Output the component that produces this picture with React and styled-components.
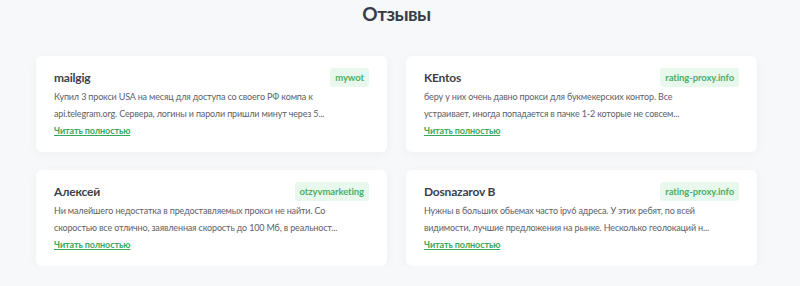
import React from "react"
import styled, { createGlobalStyle } from "styled-components"

const Global = createGlobalStyle`
    body {
        margin: 0;
        background: #f7f8f9;
        font-family: Lato, "Noto Sans", sans-serif;
    }
`

const Section = styled.section`
    width: 721px;
    margin-left: 36px;
    padding-top: 1px;
`

const Title = styled.h2`
    margin: 0 0 30px;
    text-align: center;
    font-size: 19px;
    font-weight: 700;
    letter-spacing: -0.5px;
    line-height: 25px;
    color: #383d49;
`

const Grid = styled.div`
    display: grid;
    grid-template-columns: 351px 351px;
    column-gap: 19px;
    row-gap: 18px;
`

const Card = styled.article`
    background: #fff;
    border-radius: 6px;
    box-shadow: 0 2px 12px rgba(20, 30, 50, 0.04);
    padding: 11px 18px 15px;
    height: 96px;
    box-sizing: border-box;
`

const Head = styled.div`
    display: flex;
    align-items: center;
    justify-content: space-between;
    height: 20px;
`

const Name = styled.h3`
    margin: 0;
    font-size: 12px;
    font-weight: 700;
    letter-spacing: -0.2px;
    color: #3b3f4a;
`

const Badge = styled.span`
    background: #e9f8ed;
    color: #4cae6a;
    font-size: 9.5px;
    font-weight: 700;
    letter-spacing: -0.1px;
    padding: 0 5px;
    line-height: 19px;
    border-radius: 3px;
`

const Text = styled.p`
    margin: 2px 0 0;
    width: 290px;
    font-size: 9px;
    letter-spacing: -0.15px;
    line-height: 16.5px;
    color: #5d6068;
`

const More = styled.a`
    display: block;
    width: fit-content;
    margin-top: 1px;
    font-size: 9px;
    font-weight: 700;
    letter-spacing: -0.1px;
    line-height: 16px;
    color: #3aa85a;
    text-decoration: underline;
`

const reviews = [
    { name: "mailgig", site: "mywot", text: "Купил 3 прокси USA на месяц для доступа со своего РФ компа к api.telegram.org. Сервера, логины и пароли пришли минут через 5..." },
    { name: "KEntos", site: "rating-proxy.info", text: "беру у них очень давно прокси для букмекерских контор. Все устраивает, иногда попадается в пачке 1-2 которые не совсем..." },
    { name: "Алексей", site: "otzyvmarketing", text: "Ни малейшего недостатка в предоставляемых прокси не найти. Со скоростью все отлично, заявленная скорость до 100 Мб, в реальност..." },
    { name: "Dosnazarov B", site: "rating-proxy.info", text: "Нужны в больших обьемах часто ipv6 адреса. У этих ребят, по всей видимости, лучшие предложения на рынке. Несколько геолокаций н..." },
]

const App = () => (
    <>
        <Global />
        <Section>
            <Title>Отзывы</Title>
            <Grid>
                {reviews.map(r => (
                    <Card key={r.name}>
                        <Head>
                            <Name>{r.name}</Name>
                            <Badge>{r.site}</Badge>
                        </Head>
                        <Text>{r.text}</Text>
                        <More href="#">Читать полностью</More>
                    </Card>
                ))}
            </Grid>
        </Section>
    </>
)

export default App
